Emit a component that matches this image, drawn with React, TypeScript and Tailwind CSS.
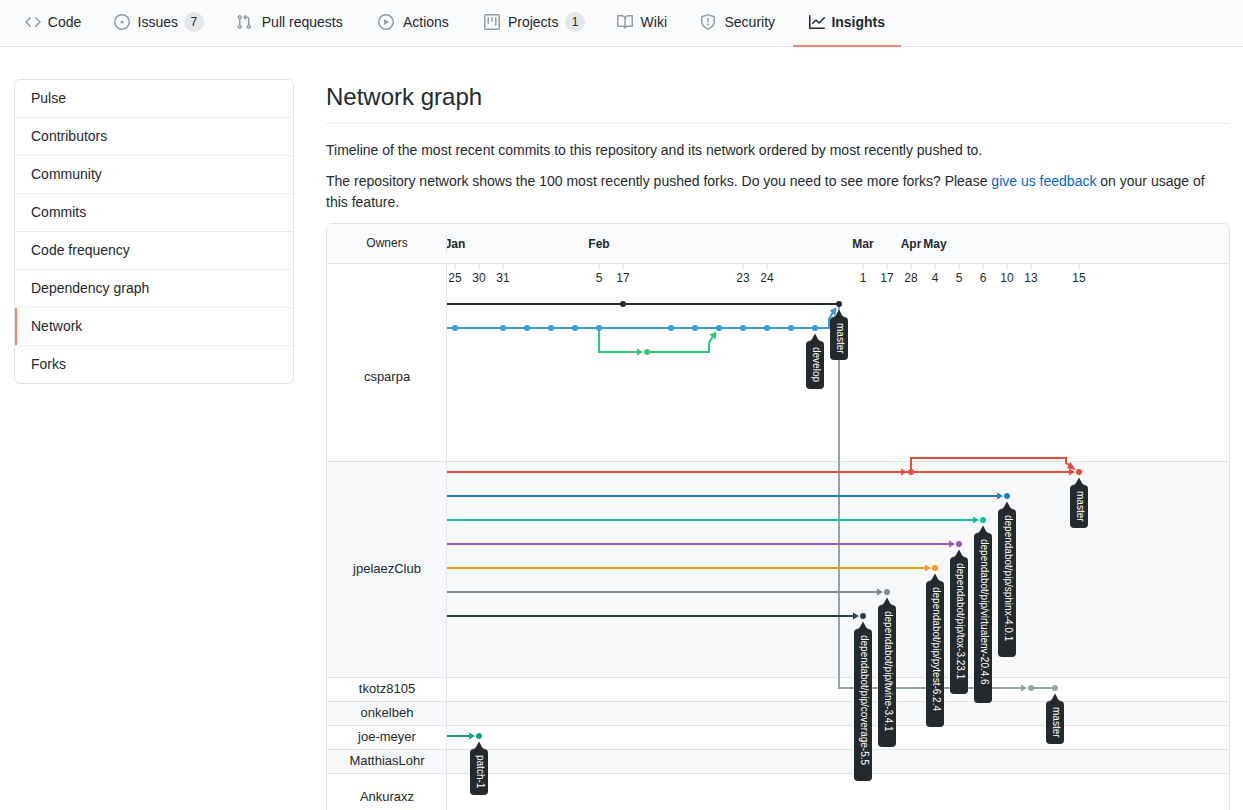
import React from "react";

const ICONS = {
  code: "M4.72 3.22a.75.75 0 011.06 1.06L2.06 8l3.72 3.72a.75.75 0 11-1.06 1.06L.47 8.53a.75.75 0 010-1.06l4.25-4.25zm6.56 0a.75.75 0 10-1.06 1.06L13.94 8l-3.72 3.72a.75.75 0 101.06 1.06l4.25-4.25a.75.75 0 000-1.06l-4.25-4.25z",
  issue: "M8 0a8 8 0 100 16A8 8 0 008 0zM1.5 8a6.5 6.5 0 1113 0 6.5 6.5 0 01-13 0zM8 9.5a1.5 1.5 0 100-3 1.5 1.5 0 000 3z",
  pull: "M7.177 3.073L9.573.677A.25.25 0 0110 .854v4.792a.25.25 0 01-.427.177L7.177 3.427a.25.25 0 010-.354zM3.75 2.5a.75.75 0 100 1.5.75.75 0 000-1.5zm-2.25.75a2.25 2.25 0 113 2.122v5.256a2.251 2.251 0 11-1.5 0V5.372A2.25 2.25 0 011.5 3.25zM11 2.5h-1V4h1a1 1 0 011 1v5.628a2.251 2.251 0 101.5 0V5A2.5 2.5 0 0011 2.5zm1 10.25a.75.75 0 111.5 0 .75.75 0 01-1.5 0zM3.75 12a.75.75 0 100 1.5.75.75 0 000-1.5z",
  play: "M1.5 8a6.5 6.5 0 1113 0 6.5 6.5 0 01-13 0zM8 0a8 8 0 100 16A8 8 0 008 0zM6.379 5.227A.25.25 0 006 5.442v5.117a.25.25 0 00.379.214l4.264-2.559a.25.25 0 000-.428L6.379 5.227z",
  project: "M1.75 0A1.75 1.75 0 000 1.75v12.5C0 15.216.784 16 1.75 16h12.5A1.75 1.75 0 0016 14.25V1.75A1.75 1.75 0 0014.25 0H1.75zM1.5 1.75a.25.25 0 01.25-.25h12.5a.25.25 0 01.25.25v12.5a.25.25 0 01-.25.25H1.75a.25.25 0 01-.25-.25V1.75zM11.75 3a.75.75 0 00-.75.75v7.5a.75.75 0 001.5 0v-7.5a.75.75 0 00-.75-.75zm-8.25.75a.75.75 0 011.5 0v5.5a.75.75 0 01-1.5 0v-5.5zM8 3a.75.75 0 00-.75.75v3.5a.75.75 0 001.5 0v-3.5A.75.75 0 008 3z",
  book: "M0 1.75A.75.75 0 01.75 1h4.253c1.227 0 2.317.59 3 1.501A3.744 3.744 0 0111.006 1h4.245a.75.75 0 01.75.75v10.5a.75.75 0 01-.75.75h-4.507a2.25 2.25 0 00-1.591.659l-.622.621a.75.75 0 01-1.06 0l-.622-.621A2.25 2.25 0 005.258 13H.75a.75.75 0 01-.75-.75V1.75zm8.755 3a2.25 2.25 0 012.25-2.25H14.5v9h-3.757c-.71 0-1.4.201-1.992.572l.004-7.322zm-1.504 7.324l.004-5.073-.002-2.253A2.25 2.25 0 005.003 2.5H1.5v9h3.757a3.75 3.75 0 011.994.574z",
  shield: "M7.467.133a1.75 1.75 0 011.066 0l5.25 1.68A1.75 1.75 0 0115 3.48V7c0 1.566-.32 3.182-1.303 4.682-.983 1.498-2.585 2.813-5.032 3.855a1.7 1.7 0 01-1.33 0c-2.447-1.042-4.049-2.357-5.032-3.855C1.32 10.182 1 8.566 1 7V3.48a1.75 1.75 0 011.217-1.667l5.25-1.68zm.61 1.429a.25.25 0 00-.153 0l-5.25 1.68a.25.25 0 00-.174.238V7c0 1.358.275 2.666 1.057 3.86.784 1.194 2.121 2.34 4.366 3.297a.2.2 0 00.154 0c2.245-.956 3.582-2.104 4.366-3.298C13.225 9.666 13.5 8.36 13.5 7V3.48a.25.25 0 00-.174-.237l-5.25-1.68zM9 10.5a1 1 0 11-2 0 1 1 0 012 0zm-.25-5.75a.75.75 0 10-1.5 0v3a.75.75 0 001.5 0v-3z",
  graph: "M1.5 1.75a.75.75 0 00-1.5 0v12.5c0 .414.336.75.75.75h14.5a.75.75 0 000-1.5H1.5V1.75zm14.28 2.53a.75.75 0 00-1.06-1.06L10 7.94 7.53 5.47a.75.75 0 00-1.06 0L3.22 8.72a.75.75 0 001.06 1.06L7 7.06l2.47 2.47a.75.75 0 001.06 0l5.25-5.25z",
};

type Tab = { label: string; icon: keyof typeof ICONS; count?: number; active?: boolean };

const TABS: Tab[] = [
  { label: "Code", icon: "code" },
  { label: "Issues", icon: "issue", count: 7 },
  { label: "Pull requests", icon: "pull" },
  { label: "Actions", icon: "play" },
  { label: "Projects", icon: "project", count: 1 },
  { label: "Wiki", icon: "book" },
  { label: "Security", icon: "shield" },
  { label: "Insights", icon: "graph", active: true },
];

const MENU = ["Pulse", "Contributors", "Community", "Commits", "Code frequency", "Dependency graph", "Network", "Forks"];

const OWNERS = [
  { name: "csparpa", box: "h-[198px] pt-[30px] bg-white" },
  { name: "jpelaezClub", box: "h-[216px] bg-[#f6f8fa]" },
  { name: "tkotz8105", box: "h-6 bg-white" },
  { name: "onkelbeh", box: "h-6 bg-[#f6f8fa]" },
  { name: "joe-meyer", box: "h-6 bg-white" },
  { name: "MatthiasLohr", box: "h-6 bg-[#f6f8fa]" },
  { name: "Ankuraxz", box: "h-12 bg-white" },
];

/* Graph coordinates: x from the right edge of the owners column, y from the top of the header. */
const col = (n: number) => 8 + n * 24;
const row = (n: number) => 80 + n * 24;

const MONTHS: [string, number][] = [["Jan", 0], ["Feb", 6], ["Mar", 17], ["Apr", 19], ["May", 20]];
const DAYS: [number, number][] = [
  [25, 0], [30, 1], [31, 2], [5, 6], [17, 7], [23, 12], [24, 13], [1, 17],
  [17, 18], [28, 19], [4, 20], [5, 21], [6, 22], [10, 23], [13, 24], [15, 26],
];

/* Branches that enter from the left edge and end in an arrow at one commit: [column, row, colour]. */
const BRANCHES: [number, number, string][] = [
  [19, 7, "#e74c3c"],
  [26, 7, "#e74c3c"],
  [23, 8, "#2980b9"],
  [22, 9, "#1abc9c"],
  [21, 10, "#9b59b6"],
  [20, 11, "#f39c12"],
  [18, 12, "#7f8c8d"],
  [17, 13, "#2c3e50"],
  [1, 18, "#16a085"],
];

const TAGS: { label: string; c: number; r: number; size: number }[] = [
  { label: "develop", c: 15, r: 1, size: 48 },
  { label: "master", c: 16, r: 0, size: 43 },
  { label: "master", c: 26, r: 7, size: 43 },
  { label: "dependabot/pip/sphinx-4.0.1", c: 23, r: 8, size: 148 },
  { label: "dependabot/pip/virtualenv-20.4.6", c: 22, r: 9, size: 170 },
  { label: "dependabot/pip/tox-3.23.1", c: 21, r: 10, size: 137 },
  { label: "dependabot/pip/pytest-6.2.4", c: 20, r: 11, size: 146 },
  { label: "dependabot/pip/twine-3.4.1", c: 18, r: 12, size: 142 },
  { label: "dependabot/pip/coverage-5.5", c: 17, r: 13, size: 152 },
  { label: "master", c: 25, r: 16, size: 43 },
  { label: "patch-1", c: 1, r: 18, size: 46 },
];

function Icon({ name }: { name: keyof typeof ICONS }) {
  return (
    <svg viewBox="0 0 16 16" className="size-4 shrink-0" fill="currentColor" fillRule="evenodd" aria-hidden="true">
      <path d={ICONS[name]} />
    </svg>
  );
}

function RepoNav() {
  return (
    <nav className="flex h-[47px] border-b border-[#e1e4e8] bg-[#fafbfc] pl-[9px]" aria-label="Repository">
      {TABS.map((t) => (
        <a
          key={t.label}
          href="#"
          aria-current={t.active ? "page" : undefined}
          className={`flex h-[47px] shrink-0 items-center border-b-2 px-4 pb-px ${t.active ? "border-[#f9826c] font-bold" : "border-transparent"}`}
        >
          <span className={`mr-1.5 ${t.active ? "text-[#24292e]" : "text-[#959da5]"}`}>
            <Icon name={t.icon} />
          </span>
          <span
            data-content={t.label}
            className="text-center before:invisible before:block before:h-0 before:overflow-hidden before:font-bold before:content-[attr(data-content)]"
          >
            {t.label}
          </span>
          {t.count !== undefined && (
            <span className="ml-1 flex h-5 min-w-5 items-center justify-center rounded-full border border-transparent bg-[#e4e7ea] px-1.5 text-xs font-medium">
              {t.count}
            </span>
          )}
        </a>
      ))}
    </nav>
  );
}

function Dots({ cols, r, color }: { cols: number[]; r: number; color: string }) {
  return (
    <>
      {cols.map((c) => (
        <circle key={c} cx={col(c)} cy={row(r)} r={3} fill={color} />
      ))}
    </>
  );
}

function Arrow({ c, r, color }: { c: number; r: number; color: string }) {
  const x = col(c);
  const y = row(r);
  return <polygon points={`${x - 10},${y - 3.5} ${x - 4},${y} ${x - 10},${y + 3.5}`} fill={color} />;
}

function GraphLines() {
  return (
    <svg className="absolute inset-0 size-full" fill="none" strokeWidth={2} aria-hidden="true">
      {DAYS.map(([, c]) => (
        <path key={c} d={`M${col(c) + 0.5} 40v6`} stroke="#e1e4e8" strokeWidth={1} />
      ))}

      <path d="M392 80V464H574" stroke="#95a5a6" />
      <path d="M584 464H608" stroke="#95a5a6" />
      <Arrow c={24} r={16} color="#95a5a6" />
      <Dots cols={[24, 25]} r={16} color="#95a5a6" />

      <path d="M152 104V128H192M200 128H262V119L266 112" stroke="#2ecc71" />
      <Arrow c={8} r={2} color="#2ecc71" />
      <polygon points="269.5,107.5 268.5,115.5 262.5,110.5" fill="#2ecc71" />
      <Dots cols={[8]} r={2} color="#2ecc71" />

      <path d="M0 104H382V95L386 88" stroke="#3498db" />
      <polygon points="389.5,83.5 388.5,91.5 382.5,86.5" fill="#3498db" />
      <Dots cols={[0, 2, 3, 4, 5, 6, 9, 10, 11, 12, 13, 14, 15]} r={1} color="#3498db" />

      <path d="M0 80H392" stroke="#24292e" />
      <Dots cols={[7, 16]} r={0} color="#24292e" />

      {BRANCHES.map(([c, r, color]) => (
        <g key={`${c}-${r}`}>
          <path d={`M0 ${row(r)}H${col(c) - 8}`} stroke={color} />
          <Arrow c={c} r={r} color={color} />
          <Dots cols={[c]} r={r} color={color} />
        </g>
      ))}
      <path d="M464 248V234H619V239L624 242" stroke="#e74c3c" />
      <polygon points="629,246 620,244 623,238" fill="#e74c3c" />
    </svg>
  );
}

function BranchTag({ label, c, r, size }: { label: string; c: number; r: number; size: number }) {
  return (
    <div className="absolute flex w-[18px] flex-col" style={{ left: col(c) - 9, top: row(r) + 5 }}>
      <svg viewBox="0 0 18 8" className="h-2 w-[18px] shrink-0" fill="#24292e" aria-hidden="true">
        <path d="M9 0.5L12 6Q12.7 7.4 14.5 8H3.5Q5.3 7.4 6 6Z" />
      </svg>
      <div
        className="w-[18px] rounded bg-[#24292e] pt-1.5 text-[10px] leading-4 whitespace-nowrap text-white [writing-mode:vertical-rl]"
        style={{ height: size }}
      >
        {label}
      </div>
    </div>
  );
}

function NetworkGraph() {
  return (
    <section className="relative overflow-hidden rounded-md border border-[#e1e4e8]" aria-label="Network graph">
      <div className="flex h-10 items-center border-b border-[#e1e4e8] bg-[#fafbfc]">
        <div className="flex h-5 w-30 items-center justify-center border-x border-r-[#e1e4e8] border-l-transparent pb-0.5 text-xs">Owners</div>
      </div>
      {OWNERS.map((o) => (
        <div key={o.name} className={`flex border-b border-[#e1e4e8] ${o.box}`}>
          <div className="flex w-30 items-center justify-center pb-0.5 text-[13px] leading-5">{o.name}</div>
        </div>
      ))}
      <div className="absolute top-10 bottom-0 left-[119px] w-px bg-[#e1e4e8]" />
      <div className="absolute inset-y-0 right-0 left-30 overflow-hidden">
        {MONTHS.map(([m, c]) => (
          <span key={m} className="absolute top-3 w-10 -translate-x-1/2 text-center text-xs font-bold" style={{ left: col(c) }}>
            {m}
          </span>
        ))}
        {DAYS.map(([d, c]) => (
          <span key={c} className="absolute top-[46px] w-6 -translate-x-1/2 text-center text-xs" style={{ left: col(c) }}>
            {d}
          </span>
        ))}
        <GraphLines />
        {TAGS.map((t) => (
          <BranchTag key={`${t.c}-${t.r}`} {...t} />
        ))}
      </div>
    </section>
  );
}

export default function App() {
  return (
    <div className="min-h-screen bg-white font-['Liberation_Sans',Arial,sans-serif] text-sm leading-[21px] text-[#24292e]">
      <RepoNav />
      <div className="flex items-start gap-8 pt-8 pr-[13px] pl-3.5">
        <nav className="w-70 shrink-0 overflow-hidden rounded-md border border-[#e1e4e8]" aria-label="Insights">
          {MENU.map((m) => (
            <a
              key={m}
              href="#"
              aria-current={m === "Network" ? "page" : undefined}
              className="relative block border-b border-[#eaecef] px-4 py-2 last:border-b-0 aria-[current=page]:before:absolute aria-[current=page]:before:inset-y-0 aria-[current=page]:before:left-0 aria-[current=page]:before:w-0.5 aria-[current=page]:before:bg-[#f9826c]"
            >
              {m}
            </a>
          ))}
        </nav>
        <main className="min-w-0 flex-1">
          <h2 className="mb-4 border-b border-[#eaecef] pb-2 text-2xl leading-9 font-normal">Network graph</h2>
          <p className="mb-2.5">Timeline of the most recent commits to this repository and its network ordered by most recently pushed to.</p>
          <p className="mb-2.5">
            The repository network shows the 100 most recently pushed forks. Do you need to see more forks? Please{" "}
            <a href="#" className="text-[#0366d6]">give us feedback</a> on your usage of this feature.
          </p>
          <NetworkGraph />
        </main>
      </div>
    </div>
  );
}
